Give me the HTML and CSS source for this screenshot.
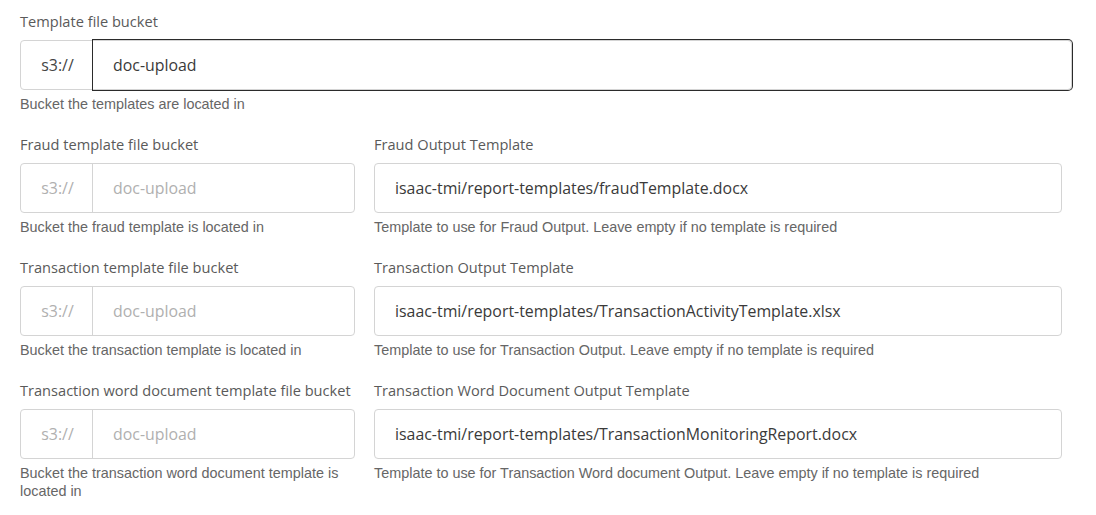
FILE: index.html
```html
<!DOCTYPE html>
<html lang="en">
<head>
<meta charset="utf-8">
<title>Report templates</title>
<link rel="stylesheet" href="styles.css">
</head>
<body>
<form class="settings">
  <div class="field field-wide">
    <label class="field-label" for="tpl-bucket">Template file bucket</label>
    <div class="input-group is-focused">
      <span class="addon">s3://</span>
      <input id="tpl-bucket" class="control" type="text" value="doc-upload">
    </div>
    <p class="help">Bucket the templates are located in</p>
  </div>

  <div class="grid">
    <div class="field">
      <label class="field-label">Fraud template file bucket</label>
      <div class="input-group is-disabled">
        <span class="addon">s3://</span>
        <input class="control" type="text" value="doc-upload" disabled>
      </div>
      <p class="help">Bucket the fraud template is located in</p>
    </div>
    <div class="field">
      <label class="field-label">Fraud Output Template</label>
      <div class="input-group">
        <input class="control" type="text" value="isaac-tmi/report-templates/fraudTemplate.docx">
      </div>
      <p class="help">Template to use for Fraud Output. Leave empty if no template is required</p>
    </div>

    <div class="field">
      <label class="field-label">Transaction template file bucket</label>
      <div class="input-group is-disabled">
        <span class="addon">s3://</span>
        <input class="control" type="text" value="doc-upload" disabled>
      </div>
      <p class="help">Bucket the transaction template is located in</p>
    </div>
    <div class="field">
      <label class="field-label">Transaction Output Template</label>
      <div class="input-group">
        <input class="control" type="text" value="isaac-tmi/report-templates/TransactionActivityTemplate.xlsx">
      </div>
      <p class="help">Template to use for Transaction Output. Leave empty if no template is required</p>
    </div>

    <div class="field">
      <label class="field-label">Transaction word document template file bucket</label>
      <div class="input-group is-disabled">
        <span class="addon">s3://</span>
        <input class="control" type="text" value="doc-upload" disabled>
      </div>
      <p class="help">Bucket the transaction word document template is located in</p>
    </div>
    <div class="field">
      <label class="field-label">Transaction Word Document Output Template</label>
      <div class="input-group">
        <input class="control" type="text" value="isaac-tmi/report-templates/TransactionMonitoringReport.docx">
      </div>
      <p class="help">Template to use for Transaction Word document Output. Leave empty if no template is required</p>
    </div>
  </div>
</form>
</body>
</html>
```

FILE: styles.css
```css
* {
  box-sizing: border-box;
}

html, body {
  margin: 0;
  background: #ffffff;
}

body {
  font-family: "Open Sans", "Noto Sans", sans-serif;
  color: #333333;
}

.settings {
  padding: 11px 0 0 20px;
  width: 1072px;
}

.grid {
  display: grid;
  grid-template-columns: 335px 688px;
  column-gap: 19px;
}

.field {
  margin-bottom: 21px;
}

.field-label {
  display: block;
  font-size: 14.6px;
  line-height: 20px;
  color: #5a5a5a;
  margin-bottom: 9px;
  white-space: nowrap;
}

.input-group {
  display: flex;
  height: 50px;
  border: 1px solid #d4d4d4;
  border-radius: 4px;
  background: #ffffff;
}

.addon {
  flex: 0 0 72px;
  display: flex;
  align-items: center;
  justify-content: center;
  font-size: 15.9px;
  color: #444444;
  border-right: 1px solid #d4d4d4;
  padding-left: 2px;
}

.control {
  flex: 1;
  min-width: 0;
  border: 0;
  background: transparent;
  font-family: inherit;
  font-size: 15.9px;
  color: #3a3a3a;
  padding: 0 0 0 20px;
  outline: none;
  border-radius: 0 3px 3px 0;
}

.input-group > .control:first-child {
  border-radius: 3px;
}

/* focused control draws its own dark outline over the group border */
.is-focused .control {
  box-shadow: 0 0 0 1px #2b2b2b;
  margin: -1px -1px -1px 0;
  border-radius: 0 4px 4px 0;
  position: relative;
}

.is-disabled .addon,
.is-disabled .control {
  color: #b0b0b0;
}

.help {
  margin: 5px 0 0;
  font-family: "Liberation Sans", Arial, sans-serif;
  font-size: 14.4px;
  line-height: 18px;
  color: #666666;
}
```
